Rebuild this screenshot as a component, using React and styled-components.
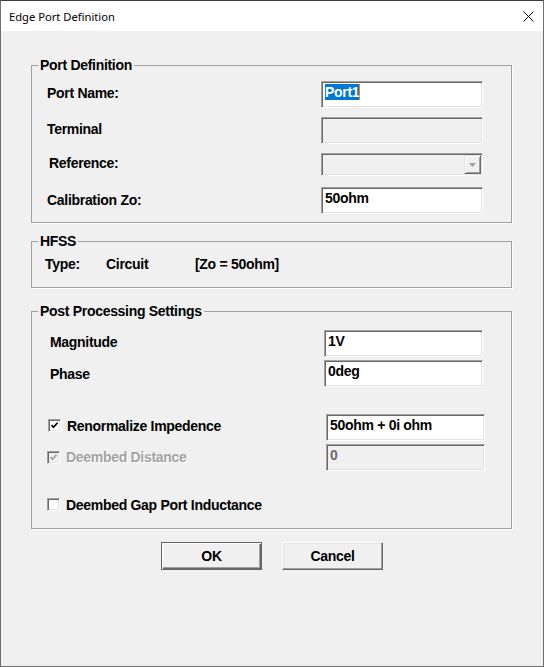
import React from "react";
import styled, { createGlobalStyle, css } from "styled-components";

const FONT = `"Liberation Sans", Arial, sans-serif`;
const TEXT = css`
  font-family: ${FONT};
  font-weight: bold;
  font-size: 14px;
  letter-spacing: -0.3px;
`;

// #region styled-components
const GlobalStyle = createGlobalStyle`
  html, body {
    margin: 0;
    padding: 0;
    background: #f0f0f0;
  }
  body {
    font-family: ${FONT};
  }
`;

const Window = styled.div`
  width: 544px;
  height: 667px;
  box-sizing: border-box;
  border: 1px solid #707070;
  border-top-color: #3c3c3c;
  background: #f0f0f0;
  display: flex;
  flex-direction: column;
  overflow: hidden;
`;

const TitleBar = styled.div`
  height: 30px;
  flex: none;
  background: #fff;
  display: flex;
  align-items: center;
  justify-content: space-between;
  padding: 0 9px 0 8px;
  font-family: "Segoe UI", "Noto Sans", sans-serif;
  font-size: 11.2px;
  color: #000;
`;

const Body = styled.div`
  padding: 25px 31px 0 30px;
`;

const GroupBox = styled.fieldset`
  margin: ${(p) => p.$mt || 0}px 0 0;
  padding: 0 0 ${(p) => p.$pb || 0}px;
  border: 1px solid #a0a0a0;
  box-shadow: 1px 1px 0 #fff;
  min-width: 0;
`;

const Legend = styled.legend`
  margin-left: 6px;
  padding: 0 2px;
  ${TEXT};
  line-height: 18px;
  color: #000;
`;

const Row = styled.div`
  display: flex;
  align-items: center;
  justify-content: space-between;
  height: ${(p) => p.$h || 27}px;
  margin-top: ${(p) => p.$mt || 0}px;
  padding-left: ${(p) => p.$pl || 15}px;
  padding-right: ${(p) => p.$pr || 28}px;

  & > :first-child {
    margin-bottom: ${(p) => p.$lift ?? 3}px;
  }
`;

const Label = styled.span`
  ${TEXT};
  line-height: 18px;
  color: ${(p) => (p.$disabled ? "#a3a3a3" : "#000")};
  ${(p) =>
    p.$disabled &&
    css`
      text-shadow: 1px 1px 0 #fff;
    `}
`;

const CheckLabel = styled.label`
  display: flex;
  align-items: center;
  gap: 6px;
`;

const sunken = css`
  box-sizing: border-box;
  border: 1px solid;
  border-color: #a0a0a0 #fff #fff #a0a0a0;
  box-shadow: inset 1px 1px 0 #696969, inset -1px -1px 0 #e3e3e3;
`;

const TextBox = styled.div`
  ${sunken};
  width: ${(p) => p.$w || 162}px;
  height: ${(p) => p.$h || 27}px;
  background: ${(p) => (p.$disabled ? "#f0f0f0" : "#fff")};
  padding: 2px 0 0 3px;
  ${TEXT};
  line-height: 16px;
  color: ${(p) => (p.$disabled ? "#6d6d6d" : "#000")};
  white-space: nowrap;
`;

const Selected = styled.span`
  background: #0078d7;
  color: #fff;
  border-right: 1px solid #f07b17;
`;

const Combo = styled.div`
  ${sunken};
  width: 162px;
  height: 23px;
  background: #f0f0f0;
  padding: 1px 1px 1px 0;
  display: flex;
  justify-content: flex-end;
`;

const DropButton = styled.span`
  box-sizing: border-box;
  width: 17px;
  height: 100%;
  background: #f0f0f0;
  border: 1px solid;
  border-color: #e3e3e3 #696969 #696969 #e3e3e3;
  box-shadow: inset 1px 1px 0 #fff, inset -1px -1px 0 #a0a0a0;
  display: flex;
  align-items: center;
  justify-content: center;
`;

const CheckBox = styled.span`
  ${sunken};
  width: 13px;
  height: 13px;
  flex: none;
  background: ${(p) => (p.$disabled ? "#f0f0f0" : "#fff")};
  display: flex;
  align-items: center;
  justify-content: center;
`;

const TypeLine = styled.div`
  display: grid;
  grid-template-columns: 61px 89px auto;
  height: 18px;
  margin-top: 5px;
  padding-left: 13px;
`;

const ButtonBar = styled.div`
  display: flex;
  justify-content: center;
  gap: 20px;
  margin-top: 13px;
  padding-left: 1px;
`;

const Button = styled.button`
  box-sizing: border-box;
  width: 101px;
  height: 28px;
  padding: 0 0 1px;
  background: #f0f0f0;
  ${TEXT};
  line-height: 18px;
  color: #000;
  border: 1px solid;
  border-color: #fff #696969 #696969 #fff;
  box-shadow: inset -1px -1px 0 #a0a0a0, inset 1px 1px 0 #e3e3e3;
  ${(p) =>
    p.$default &&
    css`
      border-color: #646464;
      box-shadow: inset 1px 1px 0 #fff, inset -1px -1px 0 #696969,
        inset -2px -2px 0 #a0a0a0;
    `}
`;
// #endregion

// #region icons
const CloseIcon = () => (
  <svg width="11" height="11" viewBox="0 0 11 11">
    <path d="M0.5 0.5 L10.5 10.5 M10.5 0.5 L0.5 10.5" stroke="#000" strokeWidth="1" />
  </svg>
);

const Tick = ({ color }) => (
  <svg width="9" height="9" viewBox="0 0 9 9">
    <polyline
      points="1.5,4 3.5,6.2 7.5,1.8"
      fill="none"
      stroke={color}
      strokeWidth="1.7"
    />
  </svg>
);

const Arrow = () => (
  <svg width="7" height="4" viewBox="0 0 7 4">
    <path d="M0 0 H7 L3.5 4 Z" fill="#a0a0a0" />
  </svg>
);
// #endregion

// #region component
const Check = ({ checked, disabled, children }) => (
  <CheckLabel>
    <CheckBox $disabled={disabled}>
      {checked && <Tick color={disabled ? "#a0a0a0" : "#000"} />}
    </CheckBox>
    {children && <Label $disabled={disabled}>{children}</Label>}
  </CheckLabel>
);

const App = () => {
  return (
    <>
      <GlobalStyle />
      <Window>
        <TitleBar>
          <span>Edge Port Definition</span>
          <CloseIcon />
        </TitleBar>
        <Body>
          <GroupBox $pb={8}>
            <Legend>Port Definition</Legend>
            <Row $mt={7}>
              <Label>Port Name:</Label>
              <TextBox>
                <Selected>Port1</Selected>
              </TextBox>
            </Row>
            <Row $mt={9}>
              <Label>Terminal</Label>
              <TextBox $disabled />
            </Row>
            <Row $mt={9} $h={23} $pl={17}>
              <Label>Reference:</Label>
              <Combo>
                <DropButton>
                  <Arrow />
                </DropButton>
              </Combo>
            </Row>
            <Row $mt={11} $lift={1}>
              <Label>Calibration Zo:</Label>
              <TextBox>50ohm</TextBox>
            </Row>
          </GroupBox>

          <GroupBox $mt={9} $pb={14}>
            <Legend>HFSS</Legend>
            <TypeLine>
              <Label>Type:</Label>
              <Label>Circuit</Label>
              <Label>[Zo = 50ohm]</Label>
            </TypeLine>
          </GroupBox>

          <GroupBox $mt={14} $pb={16}>
            <Legend>Post Processing Settings</Legend>
            <Row $mt={10} $pl={18}>
              <Label>Magnitude</Label>
              <TextBox $w={159}>1V</TextBox>
            </Row>
            <Row $mt={3} $pl={18} $lift={0}>
              <Label>Phase</Label>
              <TextBox $w={159}>0deg</TextBox>
            </Row>
            <Row $mt={27} $pl={16} $pr={26} $lift={4}>
              <Check checked>Renormalize Impedence</Check>
              <TextBox $w={159}>50ohm + 0i ohm</TextBox>
            </Row>
            <Row $mt={3} $pl={15} $pr={26} $lift={1}>
              <Check checked disabled>
                Deembed Distance
              </Check>
              <TextBox $w={159} $disabled>
                0
              </TextBox>
            </Row>
            <Row $mt={26} $h={15} $pl={15} $lift={0}>
              <Check>Deembed Gap Port Inductance</Check>
            </Row>
          </GroupBox>

          <ButtonBar>
            <Button $default>OK</Button>
            <Button>Cancel</Button>
          </ButtonBar>
        </Body>
      </Window>
    </>
  );
};
// #endregion

export default App;
